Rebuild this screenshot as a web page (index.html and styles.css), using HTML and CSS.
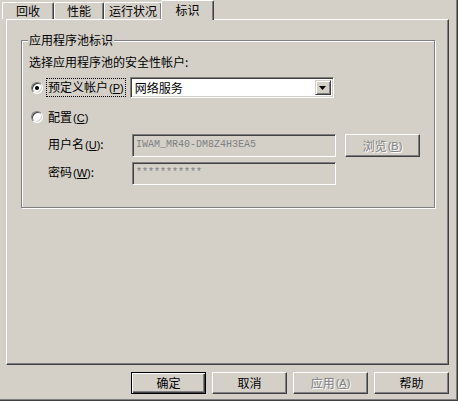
FILE: index.html
```html
<!DOCTYPE html>
<html lang="zh-CN">
<head>
<meta charset="utf-8">
<title>属性</title>
<link rel="stylesheet" href="styles.css">
</head>
<body>
<div class="dialog">
  <div class="tabs">
    <div class="tab t1">回收</div>
    <div class="tab t2">性能</div>
    <div class="tab t3">运行状况</div>
    <div class="tab t4 active">标识</div>
  </div>
  <div class="panel">
    <div class="group">
      <div class="group-title"><span>应用程序池标识</span></div>
      <div class="row row-hint">选择应用程序池的安全性帐户:</div>
      <div class="row row-radio1">
        <span class="radio checked"><span class="dot"></span></span>
        <span class="radio-label focus">预定义帐户<span class="acc">(<u>P</u>)</span></span>
        <div class="combo">
          <span class="combo-text">网络服务</span>
          <span class="combo-btn"><svg width="7" height="4" viewBox="0 0 7 4"><path d="M0 0h7L3.5 4z" fill="#000"/></svg></span>
        </div>
      </div>
      <div class="row row-radio2">
        <span class="radio"></span>
        <span class="radio-label">配置<span class="acc">(<u>C</u>)</span></span>
      </div>
      <div class="row row-field row-user">
        <span class="field-label">用户名<span class="acc">(<u>U</u>)</span>:</span>
        <div class="input disabled">IWAM_MR40-DM8Z4H3EA5</div>
        <div class="btn disabled browse">浏览<span class="acc">(<u>B</u>)</span></div>
      </div>
      <div class="row row-field row-pw">
        <span class="field-label">密码<span class="acc">(<u>W</u>)</span>:</span>
        <div class="input disabled">***********</div>
      </div>
    </div>
  </div>
  <div class="buttons">
    <div class="btn default">确定</div>
    <div class="btn">取消</div>
    <div class="btn disabled">应用<span class="acc">(<u>A</u>)</span></div>
    <div class="btn">帮助</div>
  </div>
</div>
</body>
</html>
```

FILE: styles.css
```css
* { box-sizing: border-box; }
html, body { margin: 0; padding: 0; }
body {
  background: #d4d0c8;
  font-family: "Noto Sans CJK SC", "Noto Sans", sans-serif;
  font-size: 12px;
  color: #000;
}
.dialog {
  width: 458px;
  height: 401px;
  background: #d4d0c8;
  box-shadow: inset -1px -1px 0 #404040, inset -2px -2px 0 #808080;
  overflow: hidden;
}
.tabs {
  display: flex;
  align-items: flex-end;
  height: 19px;
  padding-left: 2px;
}
.tab {
  height: 17px;
  line-height: 15px;
  text-align: center;
  border-top: 1px solid #fff;
  border-left: 1px solid #fff;
  border-right: 1px solid #404040;
  box-shadow: inset -1px 0 0 #808080;
  border-radius: 2px 2px 0 0;
  background: #d4d0c8;
}
.t1 { width: 52px; }
.t2 { width: 50px; }
.t3 { width: 58px; }
.tab.active {
  width: 53px;
  margin-left: -1px;
  height: 20px;
  line-height: 17px;
  margin-bottom: -1px;
  position: relative;
  z-index: 1;
}
.panel {
  margin-left: 6px;
  width: 443px;
  height: 346px;
  border-top: 1px solid #fff;
  border-left: 1px solid #fff;
  border-right: 1px solid #404040;
  border-bottom: 1px solid #404040;
  box-shadow: inset -1px -1px 0 #808080;
  padding: 20px 0 0 14px;
}
.group {
  width: 414px;
  height: 168px;
  border: 1px solid #808080;
  box-shadow: inset 1px 1px 0 #fff, 1px 1px 0 #fff;
  display: flex;
  flex-direction: column;
}
.group-title {
  height: 0;
  margin-top: -1px;
  padding-left: 6px;
  display: flex;
  align-items: center;
}
.group-title span {
  background: #d4d0c8;
  padding: 0 1px;
  line-height: 14px;
}
.row {
  display: flex;
  align-items: center;
}
.row-hint {
  margin-top: 15px;
  height: 14px;
  line-height: 14px;
  padding-left: 7px;
}
.row-radio1 {
  margin-top: 8px;
  height: 21px;
  padding-left: 9px;
}
.row-radio2 {
  margin-top: 10px;
  height: 18px;
  padding-left: 9px;
}
.radio {
  width: 12px;
  height: 12px;
  border-radius: 50%;
  background: #fff;
  border: 1px solid;
  border-color: #808080 #fff #fff #808080;
  box-shadow: inset 1px 1px 0 #404040, inset -1px -1px 0 #d4d0c8;
  display: flex;
  align-items: center;
  justify-content: center;
  flex: none;
}
.radio .dot {
  width: 4px;
  height: 4px;
  border-radius: 50%;
  background: #000;
}
.radio-label {
  margin-left: 3px;
  padding: 1px 1px;
  line-height: 14px;
  border: 1px dotted transparent;
}
.radio-label.focus { border-color: #000; }
.acc {
  font-family: "Liberation Sans", sans-serif;
  font-size: 11px;
  margin-left: 1px;
}
.combo {
  margin-left: 4px;
  width: 204px;
  height: 21px;
  background: #fff;
  border: 1px solid;
  border-color: #808080 #fff #fff #808080;
  box-shadow: inset 1px 1px 0 #404040, inset -1px -1px 0 #d4d0c8;
  display: flex;
  align-items: center;
  padding: 2px 2px 2px 4px;
}
.combo-text { flex: 1; line-height: 14px; }
.combo-btn {
  width: 16px;
  height: 15px;
  background: #d4d0c8;
  border: 1px solid;
  border-color: #d4d0c8 #404040 #404040 #d4d0c8;
  box-shadow: inset 1px 1px 0 #fff, inset -1px -1px 0 #808080;
  display: flex;
  align-items: center;
  justify-content: center;
}
.row-field { padding-left: 26px; }
.row-user { margin-top: 8px; height: 23px; }
.row-pw { margin-top: 5px; height: 23px; }
.field-label { width: 84px; line-height: 14px; margin-top: -3px; }
.input {
  width: 204px;
  height: 23px;
  border: 1px solid;
  border-color: #808080 #fff #fff #808080;
  box-shadow: inset 1px 1px 0 #404040, inset -1px -1px 0 #d4d0c8;
  padding: 3px 0 0 3px;
  font-family: "Liberation Mono", monospace;
  font-size: 10px;
  line-height: 14px;
}
.input.disabled { background: #d4d0c8; color: #808080; }
.btn {
  width: 75px;
  height: 22px;
  border: 1px solid;
  border-color: #fff #404040 #404040 #fff;
  box-shadow: inset -1px -1px 0 #808080;
  display: flex;
  align-items: center;
  justify-content: center;
  line-height: 14px;
}
.btn.disabled { color: #808080; text-shadow: 1px 1px 0 #fff; }
.browse { margin-left: 9px; height: 23px; }
.btn.default {
  border: 1px solid #000;
  box-shadow: inset 1px 1px 0 #fff, inset -1px -1px 0 #404040, inset -2px -2px 0 #808080;
}
.buttons {
  display: flex;
  justify-content: flex-end;
  gap: 6px;
  padding-right: 9px;
  margin-top: 7px;
}
```
